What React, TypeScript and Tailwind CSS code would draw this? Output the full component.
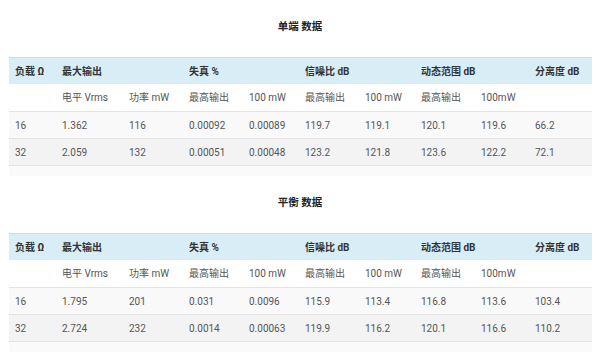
const widths = ['w-[47px]', 'w-[67px]', 'w-[60px]', 'w-[60px]', 'w-[56px]', 'w-[60px]', 'w-[56px]', 'w-[60px]', 'w-[54px]', 'flex-1'];

const headers = ['负载 Ω', '最大输出', '', '失真 %', '', '信噪比 dB', '', '动态范围 dB', '', '分离度 dB'];
const subHeaders = ['', '电平 Vrms', '功率 mW', '最高输出', '100 mW', '最高输出', '100 mW', '最高输出', '100mW', ''];

type Section = {
  title: string;
  rows: string[][];
};

const sections: Section[] = [
  {
    title: '单端 数据',
    rows: [
      ['16', '1.362', '116', '0.00092', '0.00089', '119.7', '119.1', '120.1', '119.6', '66.2'],
      ['32', '2.059', '132', '0.00051', '0.00048', '123.2', '121.8', '123.6', '122.2', '72.1'],
    ],
  },
  {
    title: '平衡 数据',
    rows: [
      ['16', '1.795', '201', '0.031', '0.0096', '115.9', '113.4', '116.8', '113.6', '103.4'],
      ['32', '2.724', '232', '0.0014', '0.00063', '119.9', '116.2', '120.1', '116.6', '110.2'],
    ],
  },
];

function Row({ cells, className }: { cells: string[]; className: string }) {
  return (
    <div className={`flex h-[27px] items-center ${className}`}>
      {cells.map((c, i) => (
        <div key={i} className={`${widths[i]} shrink-0 pl-[6px] whitespace-nowrap`}>
          {c}
        </div>
      ))}
    </div>
  );
}

export default function App() {
  return (
    <div
      className="w-[600px] h-[363px] bg-white text-[10px] text-[#555]"
      style={{ fontFamily: 'Roboto, "Noto Sans CJK SC", sans-serif' }}
    >
      {sections.map(section => (
        <div key={section.title}>
          {/* Title */}
          <div className="h-[57px] flex items-center justify-center pb-[3px] text-[10.5px] font-bold text-[#222]">
            {section.title}
          </div>

          {/* Table */}
          <div className="mx-[9px] w-[583px]">
            <Row
              cells={headers}
              className="bg-[#d9edf7] border-t border-[#c5dbe8] font-bold text-[#333]"
            />
            <Row cells={subHeaders} className="bg-white" />
            <Row cells={section.rows[0]} className="bg-[#f9f9f9] border-t border-[#e3e3e3]" />
            <Row cells={section.rows[1]} className="bg-[#f3f3f3] border-t border-[#e3e3e3]" />
            <div className="h-[11px] bg-[#fafafa] border-t border-[#e3e3e3]" />
          </div>
        </div>
      ))}
    </div>
  );
}
